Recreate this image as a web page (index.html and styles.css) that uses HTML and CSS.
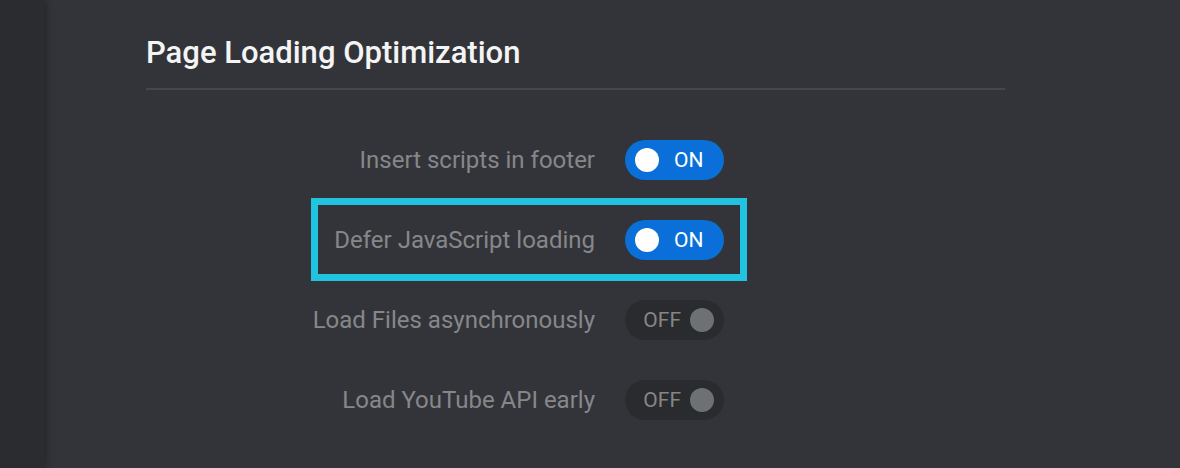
FILE: index.html
```html
<!DOCTYPE html>
<html lang="en">
<head>
  <meta charset="utf-8">
  <title>Page Loading Optimization</title>
  <link rel="stylesheet" href="styles.css">
</head>
<body>
  <div class="layout">
    <aside class="sidebar"></aside>

    <main class="content">
      <h1 class="section-title">Page Loading Optimization</h1>

      <div class="settings">
        <div class="row">
          <span class="label">Insert scripts in footer</span>
          <button class="toggle on" type="button"><span class="knob"></span><span class="state">ON</span></button>
        </div>
        <div class="row highlight">
          <span class="label">Defer JavaScript loading</span>
          <button class="toggle on" type="button"><span class="knob"></span><span class="state">ON</span></button>
        </div>
        <div class="row">
          <span class="label">Load Files asynchronously</span>
          <button class="toggle off" type="button"><span class="state">OFF</span><span class="knob"></span></button>
        </div>
        <div class="row">
          <span class="label">Load YouTube API early</span>
          <button class="toggle off" type="button"><span class="state">OFF</span><span class="knob"></span></button>
        </div>
      </div>
    </main>
  </div>
</body>
</html>
```

FILE: styles.css
```css
body {
  margin: 0;
  background: #333439;
  font-family: Roboto, "Noto Sans", sans-serif;
  overflow: hidden;
}

.layout {
  display: flex;
  height: 468px;
}

.sidebar {
  width: 45px;
  flex-shrink: 0;
  background: #2b2c30;
  box-shadow: 2px 0 6px rgba(0, 0, 0, 0.25);
}

.content {
  flex: 1;
  padding: 34px 0 0 101px;
}

.section-title {
  margin: 0;
  width: 859px;
  padding-bottom: 16px;
  border-bottom: 2px solid #46474c;
  font-size: 31px;
  font-weight: 500;
  line-height: 38px;
  color: #f4f4f5;
}

.settings {
  width: 578px;
  margin-top: 30px;
  display: flex;
  flex-direction: column;
  align-items: flex-end;
}

.row {
  display: flex;
  align-items: center;
  gap: 30px;
  height: 80px;
  box-sizing: border-box;
}

.row.highlight {
  height: 83px;
  margin: -2px -23px -1px 0;
  padding: 0 16px;
  border: 7px solid #22c3de;
}

.label {
  font-size: 24px;
  color: #86878b;
}

.toggle {
  width: 99px;
  height: 40px;
  border: none;
  border-radius: 20px;
  display: flex;
  align-items: center;
  padding: 0 10px;
  font-family: inherit;
  font-size: 21px;
  cursor: pointer;
}

.toggle .knob {
  width: 24px;
  height: 24px;
  border-radius: 50%;
  flex-shrink: 0;
}

.toggle.on {
  background: #0a6fd8;
  color: #ffffff;
  gap: 15px;
}

.toggle.on .knob {
  background: #ffffff;
}

.toggle.off {
  background: #2a2b2f;
  color: #85868a;
  justify-content: flex-end;
  gap: 9px;
}

.toggle.off .knob {
  background: #6e7174;
}
```
